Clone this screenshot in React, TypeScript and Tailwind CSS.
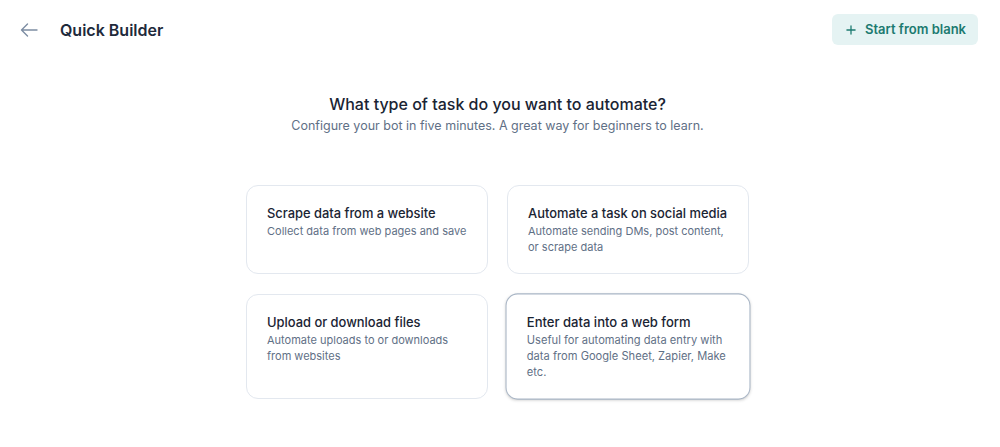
import { Plus } from 'lucide-react'

type TaskOption = {
  title: string
  description: string
  active?: boolean
}

const options: TaskOption[] = [
  { title: 'Scrape data from a website', description: 'Collect data from web pages and save' },
  { title: 'Automate a task on social media', description: 'Automate sending DMs, post content, or scrape data' },
  { title: 'Upload or download files', description: 'Automate uploads to or downloads from websites' },
  {
    title: 'Enter data into a web form',
    description: 'Useful for automating data entry with data from Google Sheet, Zapier, Make etc.',
    active: true,
  },
]

function BackIcon() {
  return (
    <svg viewBox="0 0 18 14" fill="none" stroke="currentColor" strokeWidth="1.4" className="h-[14px] w-[18px]" aria-hidden>
      <path d="M17 7H1.5M7.5 1 1.5 7l6 6" strokeLinecap="round" strokeLinejoin="round" />
    </svg>
  )
}

function TaskCard({ title, description, active }: TaskOption) {
  return (
    <div
      className={
        active
          ? 'scale-[1.012] cursor-pointer rounded-xl border border-[#a9b6c6] bg-white px-5 pb-[18px] pt-[19px] shadow-sm'
          : 'cursor-pointer rounded-xl border border-[#e3e8ef] bg-white px-5 pb-[18px] pt-[19px]'
      }
    >
      <p className="text-[12.9px] font-medium leading-[18px] text-[#1a2433]">{title}</p>
      <p className="text-[11px] leading-4 text-[#5f7086]">{description}</p>
    </div>
  )
}

export default function App() {
  return (
    <div className="min-h-[447px] bg-white font-['Inter',sans-serif]">
      <header className="flex items-center justify-between pl-[20px] pr-[22px] pt-[14px]">
        <div className="flex items-center gap-[22px]">
          <button type="button" aria-label="Go back" className="flex text-[#7d8da3]">
            <BackIcon />
          </button>
          <h1 className="text-[16px] font-semibold text-[#1e2a3b]">Quick Builder</h1>
        </div>
        <button
          type="button"
          className="flex h-[31px] items-center gap-[7px] rounded-md bg-[#e5f3f3] px-[12px] text-[13px] font-semibold text-[#1b7a70]"
        >
          <Plus className="h-[14px] w-[14px]" strokeWidth={2.2} />
          Start from blank
        </button>
      </header>

      <main className="pr-[5px]">
        <div className="mt-[47px] text-center">
          <h2 className="text-[16px] font-medium leading-6 text-[#1a2433]">What type of task do you want to automate?</h2>
          <p className="text-[12.5px] leading-5 text-[#5f7086]">
            Configure your bot in five minutes. A great way for beginners to learn.
          </p>
        </div>

        <div className="mx-auto mt-[49px] grid w-[503px] grid-cols-2 gap-x-[19px] gap-y-[20px]">
          {options.map((option) => (
            <TaskCard key={option.title} {...option} />
          ))}
        </div>
      </main>
    </div>
  )
}
